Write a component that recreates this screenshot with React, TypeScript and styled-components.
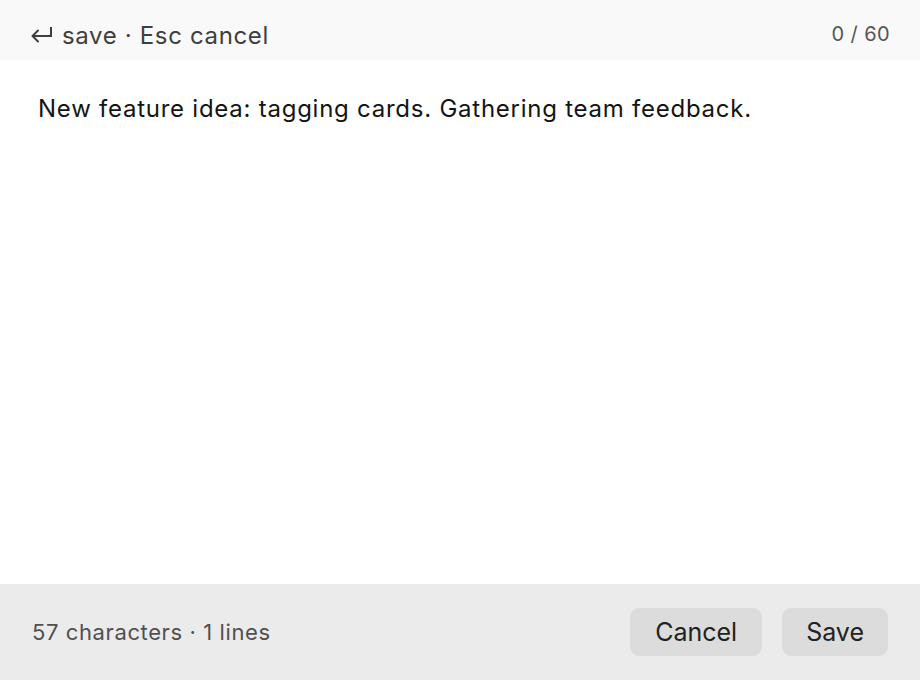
import React, { useState } from "react";
import styled, { createGlobalStyle } from "styled-components";

const GlobalStyle = createGlobalStyle`
  html, body {
    margin: 0;
    padding: 0;
    background: #ffffff;
  }
  body {
    font-family: Inter, "Liberation Sans", Arial, sans-serif;
    -webkit-font-smoothing: antialiased;
  }
`;

const Editor = styled.div`
  width: 920px;
  height: 680px;
  display: flex;
  flex-direction: column;
  background: #ffffff;
`;

const Header = styled.div`
  height: 60px;
  flex-shrink: 0;
  display: flex;
  align-items: center;
  justify-content: space-between;
  padding: 0 30px 0 30px;
  background: #f9f9f9;
  box-sizing: border-box;
`;

const Hint = styled.div`
  display: flex;
  align-items: center;
  gap: 8px;
  font-size: 24px;
  letter-spacing: 0.65px;
  color: #3f3f3f;
  padding-top: 10px;
`;

const Counter = styled.span`
  font-size: 20px;
  letter-spacing: 0.4px;
  color: #555555;
  padding-top: 8px;
`;

const Body = styled.textarea`
  flex: 1;
  border: none;
  outline: none;
  resize: none;
  margin: 0;
  padding: 34px 38px;
  font-family: inherit;
  font-size: 24px;
  letter-spacing: 0.75px;
  line-height: 30px;
  color: #141414;
  background: #ffffff;
`;

const Footer = styled.div`
  height: 96px;
  flex-shrink: 0;
  display: flex;
  align-items: center;
  justify-content: space-between;
  padding: 0 32px;
  background: #ebebeb;
  box-sizing: border-box;
`;

const Stats = styled.span`
  font-size: 22px;
  letter-spacing: 0.6px;
  color: #505050;
`;

const Actions = styled.div`
  display: flex;
  gap: 20px;
`;

const Button = styled.button<{ $wide?: boolean }>`
  height: 48px;
  padding: 0 ${(p) => (p.$wide ? "25px" : "24px")};
  border: none;
  border-radius: 9px;
  background: #dcdcdc;
  color: #222222;
  font-family: inherit;
  font-size: 25px;
  cursor: pointer;
`;

const EnterIcon = () => (
  <svg width="24" height="20" viewBox="0 0 24 20" fill="none">
    <path
      d="M21 2v9H3"
      stroke="#3f3f3f"
      strokeWidth="2"
      strokeLinejoin="miter"
    />
    <path
      d="M8 5.5L2.5 11 8 16.5"
      stroke="#3f3f3f"
      strokeWidth="2"
      strokeLinecap="round"
      strokeLinejoin="round"
    />
  </svg>
);

export default function App() {
  const [text, setText] = useState(
    "New feature idea: tagging cards. Gathering team feedback."
  );
  const lines = text.split("\n").length;

  return (
    <Editor>
      <GlobalStyle />
      <Header>
        <Hint>
          <EnterIcon />
          <span>save · Esc cancel</span>
        </Hint>
        <Counter>0 / 60</Counter>
      </Header>
      <Body value={text} onChange={(e) => setText(e.target.value)} />
      <Footer>
        <Stats>
          {text.length} characters · {lines} lines
        </Stats>
        <Actions>
          <Button $wide>Cancel</Button>
          <Button>Save</Button>
        </Actions>
      </Footer>
    </Editor>
  );
}
